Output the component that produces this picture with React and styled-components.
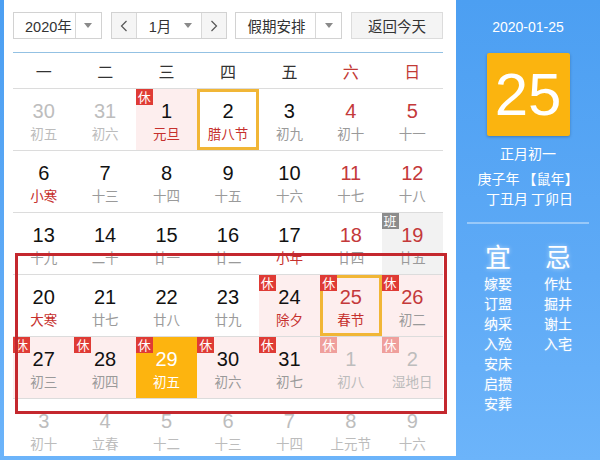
import styled, { createGlobalStyle } from "styled-components";

const GlobalStyle = createGlobalStyle`
  html, body {
    margin: 0;
    padding: 0;
  }
  body {
    font-family: "Liberation Sans", "Noto Sans CJK SC", sans-serif;
  }
`;

const weeks = [
  [
    { d: 30, l: "初五", other: true },
    { d: 31, l: "初六", other: true },
    { d: 1, l: "元旦", fest: true, rest: true },
    { d: 2, l: "腊八节", fest: true, ring: true },
    { d: 3, l: "初九" },
    { d: 4, l: "初十" },
    { d: 5, l: "十一" },
  ],
  [
    { d: 6, l: "小寒", fest: true },
    { d: 7, l: "十三" },
    { d: 8, l: "十四" },
    { d: 9, l: "十五" },
    { d: 10, l: "十六" },
    { d: 11, l: "十七" },
    { d: 12, l: "十八" },
  ],
  [
    { d: 13, l: "十九" },
    { d: 14, l: "二十" },
    { d: 15, l: "廿一" },
    { d: 16, l: "廿二" },
    { d: 17, l: "小年", fest: true },
    { d: 18, l: "廿四" },
    { d: 19, l: "廿五", work: true },
  ],
  [
    { d: 20, l: "大寒", fest: true },
    { d: 21, l: "廿七" },
    { d: 22, l: "廿八" },
    { d: 23, l: "廿九" },
    { d: 24, l: "除夕", fest: true, rest: true },
    { d: 25, l: "春节", fest: true, rest: true, ring: true },
    { d: 26, l: "初二", rest: true },
  ],
  [
    { d: 27, l: "初三", rest: true },
    { d: 28, l: "初四", rest: true },
    { d: 29, l: "初五", rest: true, selected: true },
    { d: 30, l: "初六", rest: true },
    { d: 31, l: "初七", rest: true },
    { d: 1, l: "初八", rest: true, other: true },
    { d: 2, l: "湿地日", rest: true, other: true },
  ],
  [
    { d: 3, l: "初十", other: true },
    { d: 4, l: "立春", other: true },
    { d: 5, l: "十二", other: true },
    { d: 6, l: "十三", other: true },
    { d: 7, l: "十四", other: true },
    { d: 8, l: "上元节", other: true },
    { d: 9, l: "十六", other: true },
  ],
];

const weekdays = ["一", "二", "三", "四", "五", "六", "日"];
const good = ["嫁娶", "订盟", "纳采", "入殓", "安床", "启攒", "安葬"];
const bad = ["作灶", "掘井", "谢土", "入宅"];

const App = () => {
  return (
    <Page>
      <GlobalStyle />
      <LeftPanel>
        <Toolbar>
          <Select $w={89}>
            <SelectText>2020年</SelectText>
            <ArrowBox>
              <Caret />
            </ArrowBox>
          </Select>
          <MonthGroup>
            <NavButton>
              <svg width="8" height="12" viewBox="0 0 8 12">
                <polyline points="6.5,1 1.5,6 6.5,11" fill="none" stroke="#555" strokeWidth="1.2" />
              </svg>
            </NavButton>
            <MonthText>
              <span>1月</span>
              <Caret />
            </MonthText>
            <NavButton $right>
              <svg width="8" height="12" viewBox="0 0 8 12">
                <polyline points="1.5,1 6.5,6 1.5,11" fill="none" stroke="#555" strokeWidth="1.2" />
              </svg>
            </NavButton>
          </MonthGroup>
          <Select $w={107}>
            <SelectText>假期安排</SelectText>
            <ArrowBox>
              <Caret />
            </ArrowBox>
          </Select>
          <TodayButton>返回今天</TodayButton>
        </Toolbar>

        <WeekHeader>
          {weekdays.map((w, i) => (
            <WeekDay key={w} $weekend={i > 4}>
              {w}
            </WeekDay>
          ))}
        </WeekHeader>

        {weeks.map((week, r) => (
          <Row key={r}>
            {week.map((c, i) => (
              <Cell
                key={i}
                $rest={c.rest}
                $work={c.work}
                $ring={c.ring}
                $selected={c.selected}
              >
                {c.rest && <Badge $faded={c.other}>休</Badge>}
                {c.work && <Badge $work>班</Badge>}
                <DayNum $other={c.other} $weekend={i > 4} $selected={c.selected}>
                  {c.d}
                </DayNum>
                <Lunar $other={c.other} $fest={c.fest} $selected={c.selected}>
                  {c.l}
                </Lunar>
              </Cell>
            ))}
          </Row>
        ))}

        <Marker />
      </LeftPanel>

      <RightPanel>
        <DateLine>2020-01-25</DateLine>
        <BigDay>25</BigDay>
        <InfoLine $mt={7}>正月初一</InfoLine>
        <InfoLine $mt={5}>庚子年 【鼠年】</InfoLine>
        <InfoLine $mt={0} $shift={3}>丁丑月 丁卯日</InfoLine>
        <Divider />
        <Almanac>
          <AlmanacCol>
            <AlmanacHead>宜</AlmanacHead>
            {good.map((g) => (
              <AlmanacItem key={g}>{g}</AlmanacItem>
            ))}
          </AlmanacCol>
          <AlmanacCol>
            <AlmanacHead>忌</AlmanacHead>
            {bad.map((g) => (
              <AlmanacItem key={g}>{g}</AlmanacItem>
            ))}
          </AlmanacCol>
        </Almanac>
      </RightPanel>
    </Page>
  );
};

export default App;

const Page = styled.div`
  width: 600px;
  height: 460px;
  display: flex;
  overflow: hidden;
  background: linear-gradient(180deg, #4c9ff2 0%, #5eaaf6 60%, #6cb4fa 100%);
`;

const LeftPanel = styled.div`
  position: relative;
  width: 452px;
  height: 456px;
  margin-left: 4px;
  padding: 12px 13px 0 9px;
  box-sizing: border-box;
  background: #fff;
  overflow: hidden;
`;

const Toolbar = styled.div`
  display: flex;
  height: 27px;
  gap: 9px;
  font-size: 14.5px;
  color: #333;
`;

const Select = styled.div`
  width: ${(p) => p.$w}px;
  display: flex;
  border: 1px solid #d2d2d2;
  box-sizing: border-box;
  background: #fff;
`;

const SelectText = styled.div`
  flex: 1;
  display: flex;
  align-items: center;
  padding-left: 11px;
`;

const ArrowBox = styled.div`
  width: 25px;
  display: flex;
  align-items: center;
  justify-content: center;
  border-left: 1px solid #d8d8d8;
`;

const Caret = styled.span`
  width: 0;
  height: 0;
  border-left: 4px solid transparent;
  border-right: 4px solid transparent;
  border-top: 5px solid #8a8a8a;
`;

const MonthGroup = styled.div`
  width: 117px;
  display: flex;
  border: 1px solid #d2d2d2;
  box-sizing: border-box;
  margin-right: -1px;
`;

const NavButton = styled.div`
  width: 24px;
  display: flex;
  align-items: center;
  justify-content: center;
  background: #f5f5f5;
  border-${(p) => (p.$right ? "left" : "right")}: 1px solid #d8d8d8;
`;

const MonthText = styled.div`
  flex: 1;
  display: flex;
  align-items: center;
  justify-content: space-between;
  padding: 0 9px 0 12px;
`;

const TodayButton = styled.div`
  width: 92px;
  display: flex;
  align-items: center;
  justify-content: center;
  border: 1px solid #dcdcdc;
  box-sizing: border-box;
  background: #f4f4f4;
`;

const WeekHeader = styled.div`
  margin-top: 13px;
  height: 37px;
  display: grid;
  grid-template-columns: repeat(7, 1fr);
  border-top: 1px solid #93c1e3;
  border-bottom: 1px solid #dcdcdc;
  box-sizing: border-box;
`;

const WeekDay = styled.div`
  display: flex;
  align-items: center;
  justify-content: center;
  font-family: "Noto Sans CJK SC", sans-serif;
  font-size: 16px;
  color: ${(p) => (p.$weekend ? "#c23a36" : "#333")};
`;

const Row = styled.div`
  display: grid;
  grid-template-columns: repeat(7, 1fr);
  border-bottom: 1px solid #dcdcdc;
`;

const Cell = styled.div`
  position: relative;
  height: 61px;
  display: flex;
  flex-direction: column;
  align-items: center;
  padding-top: 11px;
  box-sizing: border-box;
  background: ${(p) =>
    p.$selected ? "#fdb40f" : p.$rest ? "#fdeeee" : p.$work ? "#f2f2f2" : "transparent"};
  box-shadow: ${(p) => (p.$ring ? "inset 0 0 0 3px #f1b636" : "none")};
`;

const Badge = styled.div`
  position: absolute;
  top: 0;
  left: 0;
  width: 17px;
  height: 16px;
  font-family: "Noto Sans CJK SC", sans-serif;
  font-size: 13px;
  line-height: 16px;
  text-align: center;
  color: #fff;
  background: ${(p) => (p.$work ? "#8c8c8c" : p.$faded ? "#ef9f9c" : "#df3b35")};
`;

const DayNum = styled.div`
  font-size: 20px;
  line-height: 22px;
  color: ${(p) =>
    p.$selected ? "#fff" : p.$other ? "#bdbdbd" : p.$weekend ? "#c4393a" : "#111"};
`;

const Lunar = styled.div`
  margin-top: 3px;
  font-family: "Noto Sans CJK SC", sans-serif;
  font-size: 13.5px;
  line-height: 16px;
  color: ${(p) =>
    p.$selected ? "#fff" : p.$other ? "#bcbcbc" : p.$fest ? "#c6302d" : "#9a9a9a"};
`;

const Marker = styled.div`
  position: absolute;
  left: 11px;
  top: 253px;
  width: 432px;
  height: 161px;
  border: 3px solid #c4282e;
  box-sizing: border-box;
  pointer-events: none;
`;

const RightPanel = styled.div`
  width: 144px;
  display: flex;
  flex-direction: column;
  align-items: center;
  color: #fff;
  font-family: "Noto Sans CJK SC", sans-serif;
`;

const DateLine = styled.div`
  margin-top: 18px;
  font-family: "Liberation Sans", sans-serif;
  font-size: 14px;
  line-height: 18px;
`;

const BigDay = styled.div`
  margin-top: 17px;
  width: 83px;
  height: 83px;
  display: flex;
  align-items: center;
  justify-content: center;
  border-radius: 2px;
  background: #fbb40f;
  box-shadow: 0 1px 3px rgba(0, 0, 0, 0.25);
  font-family: "Liberation Sans", sans-serif;
  font-size: 60px;
  line-height: 1;
`;

const InfoLine = styled.div`
  margin-top: ${(p) => p.$mt}px;
  padding-left: ${(p) => p.$shift || 0}px;
  font-size: 14px;
  line-height: 20px;
  white-space: nowrap;
`;

const Divider = styled.div`
  margin-top: 14px;
  width: 122px;
  height: 2px;
  background: rgba(255, 255, 255, 0.38);
`;

const Almanac = styled.div`
  margin-top: 13px;
  display: flex;
  gap: 32px;
`;

const AlmanacCol = styled.div`
  width: 28px;
  display: flex;
  flex-direction: column;
  align-items: center;
`;

const AlmanacHead = styled.div`
  font-size: 26px;
  line-height: normal;
  margin-bottom: -1px;
  text-shadow: 0 0 4px rgba(255, 255, 255, 0.6);
`;

const AlmanacItem = styled.div`
  font-size: 14px;
  line-height: 20px;
  white-space: nowrap;
  text-shadow: 0 0 2px rgba(255, 255, 255, 0.35);
`;
